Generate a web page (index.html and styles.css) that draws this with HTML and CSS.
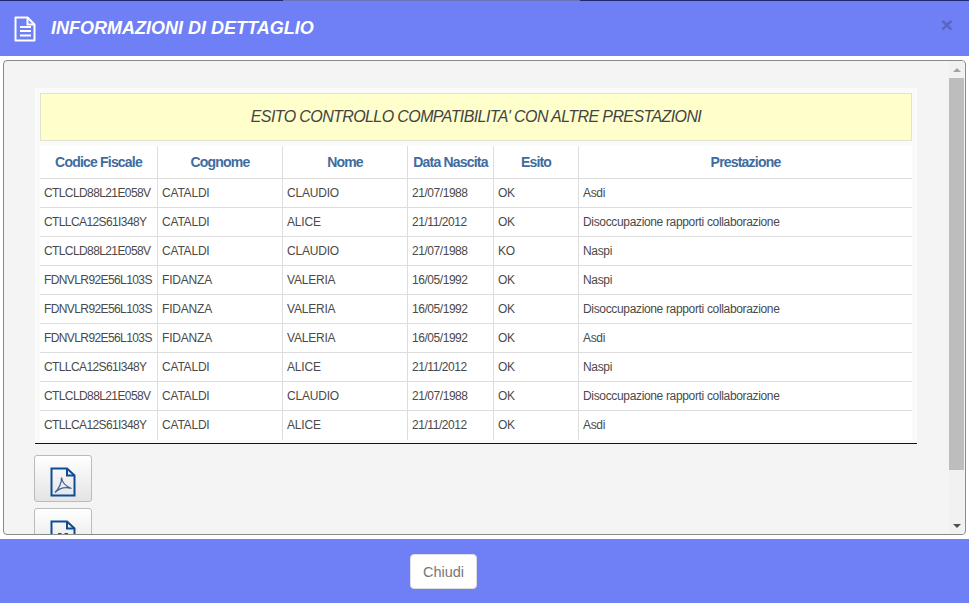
FILE: index.html
```html
<!DOCTYPE html>
<html lang="it">
<head>
    <meta charset="UTF-8">
    <meta name="viewport" content="width=device-width, initial-scale=1.0">
    <title>Informazioni di dettaglio</title>
    <link rel="stylesheet" href="styles.css">
</head>
<body>
    <div class="modal">
        <div class="modal-header">
            <svg class="header-icon" viewBox="0 0 22 26" width="22" height="26" fill="none" stroke="#fff" stroke-width="2">
                <path d="M1.500 1.500H13.500L20.500 8.500V24.500H1.500Z" stroke-linejoin="round"/>
                <path d="M13.500 1.500V8.500H20.500"/>
                <path d="M6 11H17M6 15H17M6 19.500H17" stroke-width="2"/>
            </svg>
            <h1>INFORMAZIONI DI DETTAGLIO</h1>
            <span class="close">&times;</span>
        </div>
        <div class="modal-body">
            <div class="body-scroll">
                <div class="table-box">
                    <div class="table-title">ESITO CONTROLLO COMPATIBILITA' CON ALTRE PRESTAZIONI</div>
                    <table>
                        <thead>
                            <tr>
                                <th class="col-cf">Codice Fiscale</th>
                                <th class="col-name">Cognome</th>
                                <th class="col-name">Nome</th>
                                <th class="col-date">Data Nascita</th>
                                <th class="col-esito">Esito</th>
                                <th>Prestazione</th>
                            </tr>
                        </thead>
                        <tbody>
                            <tr><td>CTLCLD88L21E058V</td><td>CATALDI</td><td>CLAUDIO</td><td>21/07/1988</td><td>OK</td><td>Asdi</td></tr>
                            <tr><td>CTLLCA12S61I348Y</td><td>CATALDI</td><td>ALICE</td><td>21/11/2012</td><td>OK</td><td>Disoccupazione rapporti collaborazione</td></tr>
                            <tr><td>CTLCLD88L21E058V</td><td>CATALDI</td><td>CLAUDIO</td><td>21/07/1988</td><td>KO</td><td>Naspi</td></tr>
                            <tr><td>FDNVLR92E56L103S</td><td>FIDANZA</td><td>VALERIA</td><td>16/05/1992</td><td>OK</td><td>Naspi</td></tr>
                            <tr><td>FDNVLR92E56L103S</td><td>FIDANZA</td><td>VALERIA</td><td>16/05/1992</td><td>OK</td><td>Disoccupazione rapporti collaborazione</td></tr>
                            <tr><td>FDNVLR92E56L103S</td><td>FIDANZA</td><td>VALERIA</td><td>16/05/1992</td><td>OK</td><td>Asdi</td></tr>
                            <tr><td>CTLLCA12S61I348Y</td><td>CATALDI</td><td>ALICE</td><td>21/11/2012</td><td>OK</td><td>Naspi</td></tr>
                            <tr><td>CTLCLD88L21E058V</td><td>CATALDI</td><td>CLAUDIO</td><td>21/07/1988</td><td>OK</td><td>Disoccupazione rapporti collaborazione</td></tr>
                            <tr><td>CTLLCA12S61I348Y</td><td>CATALDI</td><td>ALICE</td><td>21/11/2012</td><td>OK</td><td>Asdi</td></tr>
                        </tbody>
                    </table>
                </div>
                <button class="export-btn" type="button" aria-label="PDF">
                    <svg viewBox="0 0 26 30" width="26" height="30" fill="none" stroke="#0f4c96" stroke-width="2">
                        <path d="M1.500 1.500H17L24.500 8.500V28.500H1.500Z"/>
                        <path d="M17 1.500V8.500H24.500"/>
                        <path d="M5 25.500C9 21.500 12 15 11.500 10.500C12 15 15 19 21.500 21.500C15 19.500 9 21.500 5 25.500Z" stroke="#44619b" stroke-width="1.300"/>
                    </svg>
                </button>
                <button class="export-btn" type="button" aria-label="Excel">
                    <svg viewBox="0 0 26 30" width="26" height="30" fill="none" stroke="#0f4c96" stroke-width="2">
                        <path d="M1.500 1.500H17L24.500 8.500V28.500H1.500Z"/>
                        <path d="M17 1.500V8.500H24.500"/>
                        <path d="M9.500 13.500L16.500 25M16.500 13.500L9.500 25" stroke="#244f8f" stroke-width="2.400"/>
                        <path d="M8 13.500H11.500M14.500 13.500H18" stroke="#244f8f" stroke-width="1"/>
                    </svg>
                </button>
            </div>
            <div class="scrollbar">
                <span class="arrow-up"></span>
                <div class="thumb"></div>
                <span class="arrow-down"></span>
            </div>
        </div>
        <div class="modal-footer">
            <button class="close-btn" type="button">Chiudi</button>
        </div>
    </div>
</body>
</html>
```

FILE: styles.css
```css
html, body {
    height: 100%;
}

body {
    margin: 0;
    font-family: "Liberation Sans", Arial, sans-serif;
    background-color: #fff;
    overflow: hidden;
}

.modal {
    height: 603px;
    display: flex;
    flex-direction: column;
}

.modal-header {
    height: 56px;
    flex: none;
    display: flex;
    align-items: center;
    padding: 1px 16px 0 14px;
    background:
        linear-gradient(to right, #1d2a72 283px, #6a74b8 283px, #6a74b8 580px, #1d2a72 580px) top / 100% 1px no-repeat,
        #6f7ff5;
    box-sizing: border-box;
}

.header-icon {
    margin-right: 15px;
}

.modal-header h1 {
    flex: 1;
    margin: 0;
    font-size: 18px;
    font-style: italic;
    font-weight: bold;
    color: #fff;
}

.close {
    margin-bottom: 8px;
    font-size: 21px;
    font-weight: bold;
    line-height: 1;
    color: #5a65bf;
}

.modal-body {
    height: 475px;
    flex: none;
    display: flex;
    margin: 4px 3px 0 3px;
    background-color: #f4f4f4;
    border: 1px solid #8a8a8a;
    border-radius: 4px;
    box-sizing: border-box;
    overflow: hidden;
}

.body-scroll {
    flex: 1;
    min-width: 0;
    padding: 27px 32px 0 31px;
    overflow: hidden;
}

.table-box {
    padding: 5px 5px 3px 5px;
    margin-bottom: 11px;
    background-color: #fafafa;
    border-bottom: 1px solid #111;
}

.table-title {
    height: 48px;
    line-height: 46px;
    margin-bottom: 5px;
    text-align: center;
    font-size: 16px;
    font-style: italic;
    letter-spacing: -0.6px;
    color: #444;
    background-color: #ffffcc;
    border: 1px solid #e2e2d2;
    box-sizing: border-box;
}

table {
    width: 100%;
    table-layout: fixed;
    border-collapse: collapse;
    background-color: #fff;
}

th, td {
    border: 1px solid #ddd;
}

th:first-child, td:first-child {
    border-left: none;
}

th:last-child, td:last-child {
    border-right: none;
}

th {
    height: 32px;
    padding: 0;
    font-size: 14px;
    letter-spacing: -0.8px;
    color: #3f6c9f;
    border-top: none;
}

td {
    height: 29px;
    padding: 0 4px;
    font-size: 12px;
    color: #4a4a4a;
    box-sizing: border-box;
}

td:nth-child(1) {
    letter-spacing: -0.6px;
}

td:nth-child(2), td:nth-child(3) {
    letter-spacing: -0.2px;
}

td:nth-child(4) {
    letter-spacing: -0.45px;
}

td:nth-child(5) {
    letter-spacing: -0.3px;
}

td:nth-child(6) {
    letter-spacing: -0.34px;
}

tbody tr:last-child td {
    border-bottom: none;
}

.col-cf {
    width: 117px;
}

.col-name {
    width: 124px;
}

.col-date {
    width: 85px;
}

.col-esito {
    width: 84px;
}

.export-btn {
    display: block;
    width: 58px;
    height: 47px;
    margin: 0 0 6px -1px;
    padding: 0;
    background: linear-gradient(#fff, #e4e4e4);
    border: 1px solid #bbb;
    border-radius: 3px;
}

.export-btn svg {
    display: block;
    margin: 7px auto 0 auto;
}

.scrollbar {
    width: 15px;
    flex: none;
    margin-right: 1px;
    display: flex;
    flex-direction: column;
    align-items: center;
    background-color: #f1f1f1;
}

.arrow-up, .arrow-down {
    width: 0;
    height: 0;
    flex: none;
    border-left: 4px solid transparent;
    border-right: 4px solid transparent;
}

.arrow-up {
    margin: 7px 0 6px 0;
    border-bottom: 4px solid #a3a3a3;
}

.thumb {
    width: 100%;
    height: 392px;
    flex: none;
    background-color: #bdbdbd;
}

.arrow-down {
    margin-top: auto;
    margin-bottom: 6px;
    border-top: 4px solid #505050;
}

.modal-footer {
    flex: 1;
    display: flex;
    justify-content: center;
    align-items: flex-start;
    margin-top: 4px;
    padding: 15px 82px 0 0;
    background-color: #6f7ff5;
}

.close-btn {
    width: 67px;
    height: 35px;
    padding: 0;
    font-family: inherit;
    font-size: 14.5px;
    color: #777;
    background-color: #fff;
    border: 1px solid #ddd;
    border-radius: 4px;
}
```
